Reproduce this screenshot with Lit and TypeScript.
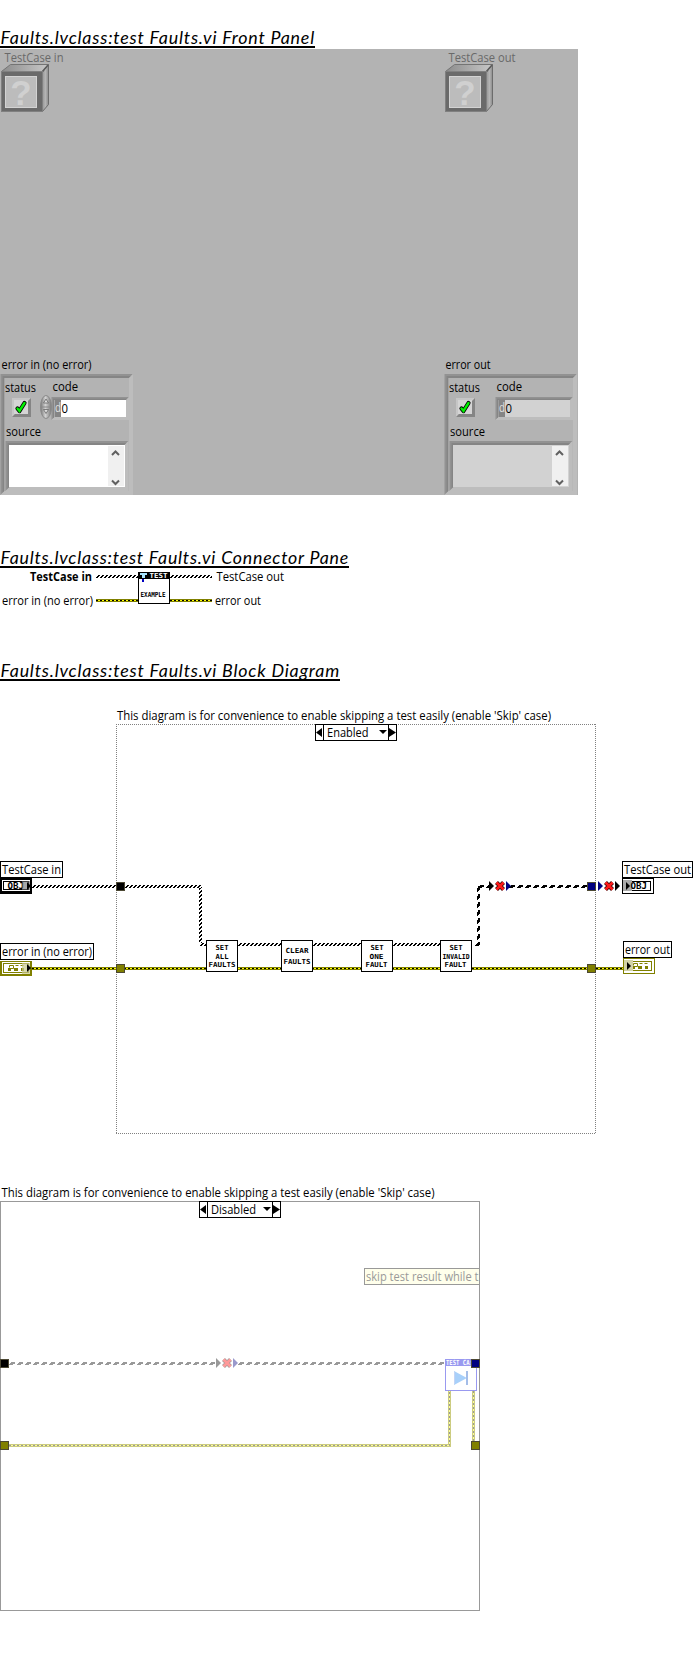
import { LitElement, html, svg, css } from "lit";
import { customElement, property } from "lit/decorators.js";

const UI = "'Open Sans','Noto Sans',sans-serif";

/** Interface label fitted to the given horizontal extent. */
const label = (s: string, x: number, base: number, w: number, fill = "#000", weight = "400") => svg`
  <text x=${x} y=${base} textLength=${w} lengthAdjust="spacingAndGlyphs" font-family=${UI}
    font-size="12" font-weight=${weight} fill=${fill}>${s}</text>`;

/** Small block lettering used on VI icons. */
const tiny = (s: string, x: number, base: number, w: number, fill = "#000", size = 7) => svg`
  <text x=${x} y=${base} textLength=${w} lengthAdjust="spacingAndGlyphs" font-family="'DejaVu Sans Mono',monospace"
    font-size=${size} font-weight="700" fill=${fill}>${s}</text>`;

const box = (x: number, y: number, w: number, h: number, fill: string, stroke = "") => stroke
  ? svg`<rect x=${x + 0.5} y=${y + 0.5} width=${w - 1} height=${h - 1} fill=${fill} stroke=${stroke}/>`
  : svg`<rect x=${x} y=${y} width=${w} height=${h} fill=${fill}/>`;

/** Horizontal hatched wire, three rows tall. */
const objWire = (x: number, y: number, w: number) => svg`
  <g stroke="#000" stroke-dasharray="2 2" fill="none">
    <path stroke-dashoffset="2" d="M${x} ${y + 0.5}h${w}"/>
    <path stroke-dashoffset="3" d="M${x} ${y + 1.5}h${w}"/>
    <path d="M${x} ${y + 2.5}h${w}"/>
  </g>`;
const objWireV = (x: number, y: number, h: number) => svg`
  <g stroke="#000" stroke-dasharray="2 2" fill="none">
    <path d="M${x + 0.5} ${y}v${h}"/>
    <path stroke-dashoffset="1" d="M${x + 1.5} ${y}v${h}"/>
    <path stroke-dashoffset="2" d="M${x + 2.5} ${y}v${h}"/>
  </g>`;
/** Wide-dash wire for dynamically typed references. */
const dynWire = (x: number, y: number, w: number, c = "#000") => svg`
  <g stroke=${c} stroke-dasharray="4 4" fill="none">
    <path stroke-dashoffset="6" d="M${x} ${y + 0.5}h${w}"/>
    <path stroke-dasharray="5 3" stroke-dashoffset="7" d="M${x} ${y + 1.5}h${w}"/>
    <path stroke-dashoffset="0" d="M${x} ${y + 2.5}h${w}"/>
  </g>`;
const dynWireV = (x: number, y: number, h: number) => svg`
  <g stroke="#000" fill="none">
    <path stroke-dasharray="4 4" stroke-dashoffset="6" d="M${x + 0.5} ${y}v${h}"/>
    <path stroke-dasharray="5 3" stroke-dashoffset="0" d="M${x + 1.5} ${y}v${h}"/>
    <path stroke-dasharray="4 4" stroke-dashoffset="0" d="M${x + 2.5} ${y}v${h}"/>
  </g>`;
const errPath = (d: string, faded = false) => svg`
  <g fill="none">
    <path d=${d} stroke=${faded ? "#cccc80" : "#808000"} stroke-width="3"/>
    <path d=${d} stroke=${faded ? "#ffff99" : "#ffff00"} stroke-width="1"/>
    <path d=${d} stroke=${faded ? "#999999" : "#000000"} stroke-width="1" stroke-dasharray="2 2"/>
  </g>`;
const node = (x: number, y: number, fill: string) => box(x, y, 9, 9, fill, "#4c4833");
const tri = (x: number, y: number, fill: string) => svg`<path fill=${fill} d="M${x} ${y}v10l5-5z"/>`;
const cross = (x: number, y: number, faded = false) => svg`
  <g fill="none">
    <path d="M${x + 1.5} ${y + 1.5}l7 7m0-7l-7 7" stroke=${faded ? "#a89a9a" : "#300"} stroke-width="4.2"/>
    <path d="M${x + 1.5} ${y + 1.5}l7 7m0-7l-7 7" stroke=${faded ? "#ff9999" : "#ff1a1a"} stroke-width="2.6"/>
  </g>`;
const vi = (x: number, y: number, lines: [string, number, number, number][]) => svg`
  ${box(x, y, 32, 32, "#fff", "#000")}${lines.map(([s, tx, b, w]) => tiny(s, tx, b, w))}`;
const tag = (s: string, x: number, y: number, w: number, tw: number) => svg`
  ${box(x, y, w, 17, "#fff", "#000")}${label(s, x + 2, y + 13, tw)}`;

const selector = (s: string, x: number, y: number, tw: number) => svg`
  ${box(x, y, 82, 17, "#fff", "#000")}
  <path d="M${x + 8.5} ${y}v17M${x + 73.5} ${y}v17" stroke="#000"/>
  <path d="M${x + 7} ${y + 4}v9l-6-4.5zM${x + 74} ${y + 4}v9l7-4.5zM${x + 64} ${y + 6}h8l-4 4z"/>
  ${label(s, x + 12, y + 12.5, tw)}`;

const errGlyph = (x: number, y: number) => svg`
  <path fill="none" stroke="#808000" d="M${x + 1.5} ${y + 3.5}v-2h4v3h-5M${x + 7.5} ${y + 1.5}h3M${x + 12.5} ${y + 1.5}h3"/>
  <path fill="#808000" d="M${x} ${y + 4}h3v3h-3zM${x + 6} ${y + 4}h4v3h-4zM${x + 13} ${y + 4}h3v3h-3z"/>`;

@customElement("doc-title")
class DocTitle extends LitElement {
  @property() text = "";
  @property({ type: Number }) width = 300;
  static styles = css`
    :host { display: block; height: 22px; }
    svg { display: block; }
    text { letter-spacing: 0.8px; }
  `;
  render() {
    return html`<svg width="693" height="22">
      <text x="0.5" y="16.5" textLength=${this.width - 0.5} lengthAdjust="spacingAndGlyphs" font-family="Lato,sans-serif"
        font-style="italic" font-size="18">${this.text}</text>
      <rect y="19" width=${this.width} height="2"/>
    </svg>`;
  }
}

@customElement("class-object")
class ClassObject extends LitElement {
  @property() name = "";
  @property({ type: Number }) textWidth = 59;
  static styles = css`:host { display: block; } svg { display: block; }`;
  render() {
    return html`<svg width="80" height="66" viewBox="0 49 80 66">
      <defs>
        <linearGradient id="t"><stop stop-color="#8c8c8c"/><stop offset="1" stop-color="#c8c8c8"/></linearGradient>
        <linearGradient id="s"><stop stop-color="#989898"/><stop offset=".5" stop-color="#b4b4b4"/><stop offset="1" stop-color="#8a8a8a"/></linearGradient>
      </defs>
      ${label(this.name, 4.5, 62, this.textWidth, "#696969")}
      <path d="M1.5 71.5l9-7h38l-6 7z" fill="url(#t)" stroke="#747474"/>
      <path d="M42.5 72l6-7.5v40l-6 7z" fill="url(#s)" stroke="#6c6c6c"/>
      <path d="M42 72l6-7" stroke="#5c5c5c" stroke-width="1.5"/>
      ${box(1, 71, 42, 41, "#6a6a6a", "#808080")}
      ${box(5, 76, 32, 32, "#bcbcbc", "#d3d3d3")}
      <text x="21" y="104.5" text-anchor="middle" font-family="'Liberation Sans',sans-serif"
        font-weight="700" font-size="35" fill="#d0d0d0">?</text>
    </svg>`;
  }
}

@customElement("error-cluster")
class ErrorCluster extends LitElement {
  @property() name = "";
  @property({ type: Number }) textWidth = 90;
  @property({ type: Boolean }) indicator = false;
  static styles = css`:host { display: block; } svg { display: block; }`;

  /** Sunken frame: dark on the top and left, light on the bottom and right. */
  frame(x: number, y: number, w: number, h: number, n: number, fill: string) {
    const r = x + w, b = y + h;
    return svg`
      <path fill="#929292" d="M${x} ${y}H${r}l${-n} ${n}H${x + n}V${b - n}L${x} ${b}z"/>
      <path fill="#858585" d="M${x + n / 2} ${y + n / 2}H${r - n / 2}l${-n / 2} ${n / 2}H${x + n}V${b - n}l${-n / 2} ${n / 2}z"/>
      <path fill="#bdbdbd" d="M${r} ${y}V${b}H${x}l${n} ${-n}H${r - n}V${y + n}z"/>
      ${box(x + n, y + n, w - 2 * n, h - 2 * n, fill)}`;
  }

  render() {
    const field = this.indicator ? "#d2d2d2" : "#fff";
    return html`<svg width="134" height="140" viewBox="0 355 134 140">
      <defs><linearGradient id="g"><stop stop-color="#777"/><stop offset=".45" stop-color="#d2d2d2"/><stop offset="1" stop-color="#777"/></linearGradient></defs>
      ${label(this.name, 1.5, 369, this.textWidth)}
      ${this.frame(0.5, 374, 132.5, 121, 4, "#b3b3b3")}
      ${label("status", 5, 392, 31)}
      ${label("code", 52.5, 391, 25.5)}
      <path d="M12 417V398h19l-3 3H15v13z" fill="#c6c6c6"/>
      <path d="M31 398v19H12l3-3h13v-13z" fill="#858585"/>
      ${box(14, 400, 14, 14, "#d5d5d5")}
      <path d="M17.5 408.500l2 2.500 5-8" fill="none" stroke="#000" stroke-width="4.2" stroke-linejoin="round" stroke-linecap="round"/>
      <path d="M17.5 408.500l2 2.500 5-8" fill="none" stroke="#00f000" stroke-width="2.4" stroke-linecap="round"/>
      ${this.frame(51.5, 397, 77.5, 23, 3, field)}
      ${box(54.5, 400, 6.5, 17, "#858585")}
      ${label("d", 55, 412, 6, "#e0e0e0")}
      ${label("0", 61.5, 412.5, 6.5)}
      ${this.indicator ? "" : svg`
        <ellipse cx="46" cy="407" rx="5.5" ry="11.5" fill="url(#g)" stroke="#8a8a8a"/>
        <path d="M41 407h10" stroke="#888"/>
        <path d="M43.5 403l2.5-4 2.5 4zM43.500 409.500h5l-2.500 4z" fill="#ddd" stroke="#666" stroke-width=".8"/>`}
      ${label("source", 6, 436, 35)}
      ${this.frame(5.5, 441, 123, 50, 4, field)}
      ${box(9, 445, 116, 42, field)}
      ${box(108, 446, 16, 40, "#f0f0f0")}
      <path d="M112 455l3.5-3.5 3.5 3.5M112 480.5l3.5 3.5 3.5-3.5" fill="none" stroke="#606060" stroke-width="2"/>
    </svg>`;
  }
}

@customElement("connector-pane")
class ConnectorPane extends LitElement {
  static styles = css`:host { display: block; } svg { display: block; }`;
  render() {
    return html`<svg width="300" height="40" viewBox="0 569 300 40">
      ${label("TestCase in", 30, 581, 62, "#000", "700")}
      ${label("error in (no error)", 2, 605, 91)}
      ${label("TestCase out", 216.5, 581, 67.5)}
      ${label("error out", 215, 605, 46)}
      ${objWire(96, 575, 42)}${objWire(170, 575, 42)}
      ${errPath("M96 600.5H138")}${errPath("M170 600.5H212")}
      ${box(138, 572, 32, 32, "#fff", "#000")}
      ${box(138, 572, 32, 7, "#000")}
      ${tiny("TEST", 149.5, 577.8, 18, "#fff")}
      <path d="M140 573h7v2h-2v3h-3v-3h-2z" fill="#a8e4ff"/>
      ${box(142, 579, 2, 3, "#0000c0")}
      ${tiny("EXAMPLE", 140.5, 597, 25)}
    </svg>`;
  }
}

@customElement("enabled-diagram")
class EnabledDiagram extends LitElement {
  static styles = css`:host { display: block; } svg { display: block; }`;
  render() {
    return html`<svg width="693" height="435" viewBox="0 702 693 435">
      ${label("This diagram is for convenience to enable skipping a test easily (enable 'Skip' case)", 117, 720, 434)}
      <path d="M116.5 724V1134M595.5 724V1134M116 724.5H596M116 1133.5H596" stroke="#808080" stroke-dasharray="1 1" fill="none"/>
      ${selector("Enabled", 315, 724, 41.5)}

      ${objWire(32, 885, 84)}${objWire(125, 885, 77)}${objWireV(199, 888, 55)}${objWire(200, 943, 6)}
      ${objWire(238, 943, 43)}${objWire(313, 943, 48)}${objWire(393, 943, 47)}
      ${errPath("M32 968.5H623")}
      ${dynWire(475, 943, 5)}${dynWireV(477, 886, 57)}${dynWire(478, 885, 11)}${dynWire(509, 885, 78)}

      ${tag("TestCase in", 0, 861, 63, 59)}
      ${box(0, 878, 32, 16, "#000")}${box(2, 880, 28, 11, "#fff")}${box(3, 881, 26, 9, "#fff", "#000")}
      ${tiny("OBJ", 7.5, 888.7, 16.5, "#000", 8)}
      ${box(22, 881, 8, 9, "rgba(110,110,110,.6)")}<path d="M27 882v8l4-4z"/>

      ${tag("error in (no error)", 0, 943, 94, 90)}
      ${box(0, 961, 32, 15, "#808000")}${box(2, 962, 28, 12, "#fff")}${box(3, 963, 26, 10, "#fff", "#808000")}
      ${errGlyph(8, 964)}${box(22, 963, 8, 11, "rgba(200,200,140,.7)")}<path d="M27 964v8l4-4z"/>

      ${node(116, 882, "#000")}${node(116, 964, "#808000")}${node(587, 882, "#000080")}${node(587, 964, "#808000")}
      ${vi(206, 940, [["SET", 215.5, 950, 13], ["ALL", 215.5, 959, 13], ["FAULTS", 208.5, 967, 27]])}
      ${vi(281, 940, [["CLEAR", 285.5, 953, 23], ["FAULTS", 283.5, 964, 27]])}
      ${vi(361, 940, [["SET", 370.5, 950, 13], ["ONE", 369.5, 959, 14], ["FAULT", 365.5, 967, 22]])}
      ${vi(440, 940, [["SET", 449.5, 950, 13], ["INVALID", 442.5, 959, 27], ["FAULT", 444.5, 967, 22]])}

      ${tri(489, 881, "#000")}${cross(495, 881)}${tri(506, 881, "#000080")}
      ${tri(598, 881, "#000080")}${cross(604, 881)}${tri(615, 881, "#000")}

      ${tag("TestCase out", 622, 861, 71, 67)}
      ${box(622, 878, 32, 16, "#fff", "#000")}${box(625, 881, 26, 10, "#fff", "#000")}
      ${box(623, 880, 9, 11, "#aaa")}
      ${tiny("OBJ", 630.5, 888.7, 16.5, "#000", 8)}<path d="M626 882v8l4-4z"/>

      ${tag("error out", 623, 941, 49, 45)}
      ${box(623, 958, 32, 16, "#fff", "#808000")}${box(626, 961, 26, 10, "#fff", "#808000")}
      ${errGlyph(632, 962)}${box(624, 960, 9, 11, "#d2d2a8")}<path d="M627 962v8l4-4z"/>
    </svg>`;
  }
}

@customElement("disabled-diagram")
class DisabledDiagram extends LitElement {
  static styles = css`:host { display: block; } svg { display: block; }`;
  render() {
    return html`<svg width="480" height="431" viewBox="0 1180 480 431">
      ${label("This diagram is for convenience to enable skipping a test easily (enable 'Skip' case)", 1.5, 1197, 433)}
      ${box(0, 1201, 480, 410, "none", "#999")}
      ${selector("Disabled", 199, 1201, 45)}
      ${box(364, 1268, 120, 17, "#ffffeb", "#999")}
      ${label("skip test result while t", 366, 1281, 112.5, "#999")}
      <path d="M479.5 1268v17" stroke="#999"/>
      ${dynWire(9, 1362, 207, "#999")}${dynWire(238, 1362, 207, "#999")}
      ${tri(216, 1358, "#999")}${cross(222, 1358, true)}${tri(233, 1358, "#9999cc")}
      ${errPath("M9 1445.5H449.5V1391", true)}${errPath("M473.5 1391V1441", true)}
      ${box(445, 1359, 32, 32, "#fff", "#9999f0")}
      ${box(445, 1359, 32, 7, "#9999f0")}
      ${tiny("TEST CA:", 446, 1365, 27, "#fff")}
      <path d="M454 1371l12 6.5v1L454 1385z" fill="#a8d0fa"/>
      <path d="M454.5 1372v12" stroke="#c4d4f4"/>
      ${box(466, 1371, 2, 14, "#a4bde8")}
      ${node(0, 1359, "#000")}${node(0, 1441, "#808000")}${node(471, 1359, "#000080")}${node(471, 1441, "#808000")}
    </svg>`;
  }
}

@customElement("app-root")
class AppRoot extends LitElement {
  static styles = css`
    :host { display: block; width: 693px; height: 1661px; background: #fff; overflow: hidden; }
    main { display: flex; flex-direction: column; padding-top: 27px; }
    .panel {
      width: 578px; height: 446px; background: #b3b3b3; display: grid;
      grid-template-columns: 444px 134px; align-content: space-between; overflow: hidden;
    }
    .gap-pane { margin-top: 52px; }
    .gap-block { margin-top: 51px; }
    .gap-enabled { margin-top: 20px; }
    .gap-disabled { margin-top: 43px; }
  `;
  render() {
    return html`<main>
      <doc-title text="Faults.lvclass:test Faults.vi Front Panel" width="315"></doc-title>
      <section class="panel">
        <class-object name="TestCase in" textWidth="59"></class-object>
        <class-object name="TestCase out" textWidth="67"></class-object>
        <error-cluster name="error in (no error)" textWidth="90"></error-cluster>
        <error-cluster name="error out" textWidth="45" indicator></error-cluster>
      </section>
      <doc-title class="gap-pane" text="Faults.lvclass:test Faults.vi Connector Pane" width="349"></doc-title>
      <connector-pane></connector-pane>
      <doc-title class="gap-block" text="Faults.lvclass:test Faults.vi Block Diagram" width="340"></doc-title>
      <enabled-diagram class="gap-enabled"></enabled-diagram>
      <disabled-diagram class="gap-disabled"></disabled-diagram>
    </main>`;
  }
}
